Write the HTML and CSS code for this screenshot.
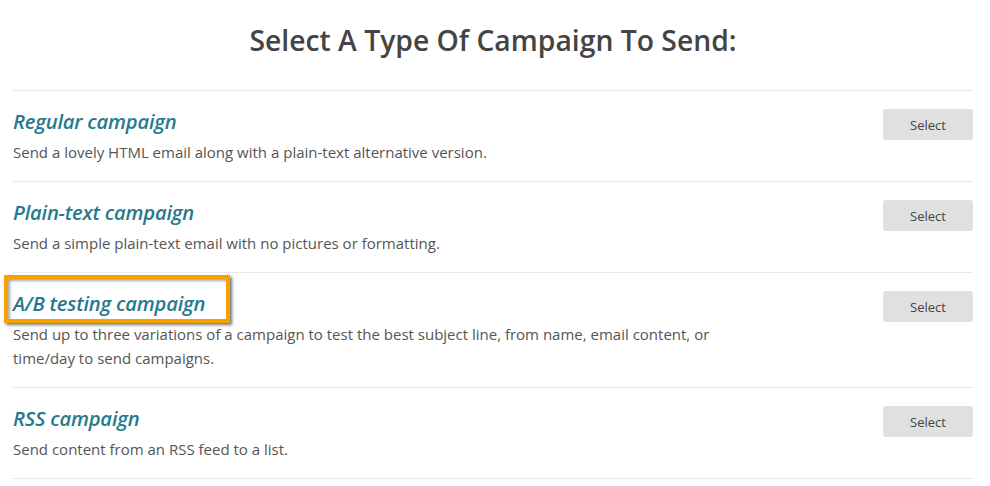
FILE: index.html
```html
<!DOCTYPE html>
<html>
<head>
<meta charset="utf-8">
<link rel="stylesheet" href="styles.css">
</head>
<body>
<div class="page">
  <h1 class="title">Select A Type Of Campaign To Send:</h1>
  <div class="list">
    <div class="row">
      <div class="info">
        <h2 class="name">Regular campaign</h2>
        <p class="desc">Send a lovely HTML email along with a plain-text alternative version.</p>
      </div>
      <button class="btn">Select</button>
    </div>
    <div class="row">
      <div class="info">
        <h2 class="name">Plain-text campaign</h2>
        <p class="desc">Send a simple plain-text email with no pictures or formatting.</p>
      </div>
      <button class="btn">Select</button>
    </div>
    <div class="row">
      <div class="info">
        <h2 class="name highlighted">A/B testing campaign<span class="marker"></span></h2>
        <p class="desc">Send up to three variations of a campaign to test the best subject line, from name, email content, or time/day to send campaigns.</p>
      </div>
      <button class="btn">Select</button>
    </div>
    <div class="row">
      <div class="info">
        <h2 class="name">RSS campaign</h2>
        <p class="desc">Send content from an RSS feed to a list.</p>
      </div>
      <button class="btn">Select</button>
    </div>
  </div>
</div>
</body>
</html>
```
FILE: styles.css
```css
html, body {
  margin: 0;
  padding: 0;
  background: #fff;
}
body {
  font-family: "Open Sans", "Liberation Sans", sans-serif;
}
.page {
  margin-left: 13px;
  width: 960px;
}
.title {
  margin: 0;
  padding-top: 20px;
  height: 90px;
  box-sizing: border-box;
  line-height: 40px;
  text-align: center;
  font-size: 28.3px;
  font-weight: 600;
  color: #444;
}
.list {
  border-bottom: 1px dotted #d4d4d4;
}
.row {
  display: flex;
  justify-content: space-between;
  align-items: flex-start;
  border-top: 1px dotted #d4d4d4;
  padding: 15px 0 17px 0;
}
.info {
  width: 720px;
}
.name {
  position: relative;
  display: inline-block;
  margin: 0 0 4px 0;
  font-size: 20.2px;
  line-height: 30px;
  font-style: italic;
  font-weight: 600;
  color: #27798c;
  letter-spacing: -0.2px;
}
.marker {
  position: absolute;
  left: -9px;
  top: -13px;
  width: 218px;
  height: 40px;
  border: 4px solid #f5a100;
  box-shadow: 2px 2px 3px rgba(0,0,0,0.55), inset 2px 2px 3px rgba(0,0,0,0.35);
}
.desc {
  margin: 0;
  font-size: 15px;
  line-height: 24px;
  color: #555;
}
.btn {
  margin-top: 3px;
  width: 90px;
  height: 31px;
  border: none;
  border-radius: 3px;
  background: #e0e0e0;
  color: #444;
  font-family: "Open Sans", "Liberation Sans", sans-serif;
  font-size: 13px;
  font-weight: 400;
  padding: 0;
}
```
